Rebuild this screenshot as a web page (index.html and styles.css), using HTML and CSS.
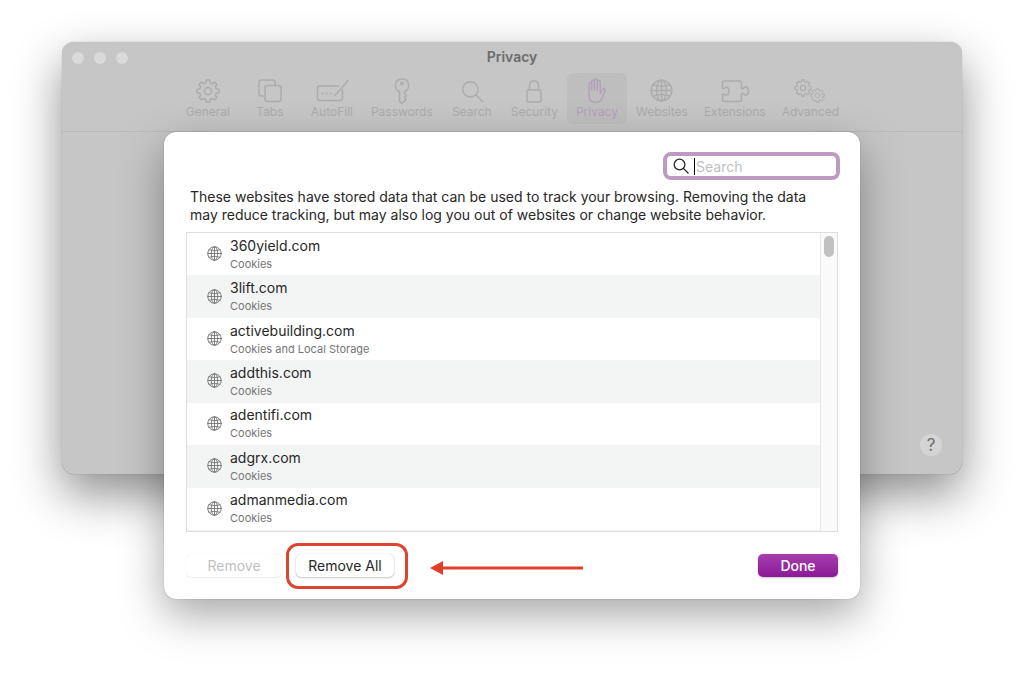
FILE: index.html
```html
<!DOCTYPE html>
<html lang="en">
<head>
    <meta charset="UTF-8">
    <meta name="viewport" content="width=device-width, initial-scale=1.0">
    <title>Privacy</title>
    <link rel="stylesheet" href="styles.css">
</head>
<body>
    <!-- shared icons -->
    <svg class="sprite" aria-hidden="true">
        <symbol id="gear" viewBox="-12 -12 24 24">
            <path d="M10.9-1.7V1.7L8.3 2.1L7.4 4.4L8.9 6.5L6.5 8.9L4.4 7.4L2.1 8.3L1.7 10.9H-1.7L-2.1 8.3L-4.4 7.4L-6.5 8.9L-8.9 6.5L-7.4 4.4L-8.3 2.1L-10.9 1.7V-1.7L-8.3-2.1L-7.4-4.4L-8.9-6.5L-6.5-8.9L-4.4-7.4L-2.1-8.3L-1.7-10.9H1.7L2.1-8.3L4.4-7.4L6.5-8.9L8.9-6.5L7.4-4.4L8.3-2.1Z"/>
            <circle r="3.6"/>
        </symbol>
        <symbol id="globe" viewBox="0 0 24 24">
            <circle cx="12" cy="12" r="10.8"/>
            <ellipse cx="12" cy="12" rx="5.2" ry="10.8"/>
            <path d="M12 1.2V22.8M1.2 12H22.8M3.2 6Q12 9.6 20.8 6M3.2 18Q12 14.4 20.8 18"/>
        </symbol>
        <symbol id="glass" viewBox="0 0 24 24">
            <circle cx="9.8" cy="9.8" r="8"/>
            <path d="M15.6 15.6L22.6 22.6"/>
        </symbol>
    </svg>

    <main class="window">
        <header class="toolbar">
            <div class="lights"><span></span><span></span><span></span></div>
            <h1>Privacy</h1>
            <nav class="tabs">
                <button class="tab"><svg viewBox="0 0 32 26"><use href="#gear" x="4" y="1" width="24" height="24"/></svg>General</button>
                <button class="tab"><svg viewBox="0 0 32 26">
                    <path d="M9.5 18H7.5Q5 18 5 15.500V4.500Q5 2 7.500 2H18.500Q21 2 21 4.500V7.500"/>
                    <rect x="11" y="7.500" width="16" height="16" rx="2.500"/>
                </svg>Tabs</button>
                <button class="tab"><svg viewBox="0 0 32 26">
                    <path d="M23 8H4Q1.500 8 1.500 10.500V20Q1.500 22.500 4 22.500H24Q26.500 22.500 26.500 20V12M20.500 16L32 2.500M20.500 16L18.500 17.500"/>
                    <path class="dots" d="M6.500 15.500V15.500M10.500 15.500V15.500M14.500 15.500V15.500"/>
                </svg>AutoFill</button>
                <button class="tab"><svg viewBox="0 0 32 26">
                    <path d="M13.500 13.500C7.500 11 8 1 16 1C24 1 24.500 11 18.500 13.500V15.500L20.500 17.500L18.500 19.500L20 21.500L16 25.500L13.500 23Z"/>
                    <circle cx="16" cy="5.500" r="1.300"/>
                </svg>Passwords</button>
                <button class="tab"><svg viewBox="0 0 32 26"><use href="#glass" x="5" y="2" width="23" height="23"/></svg>Search</button>
                <button class="tab"><svg viewBox="0 0 32 26">
                    <rect x="9" y="12" width="14" height="12" rx="1.500"/>
                    <path d="M11.500 12V7.500Q11.500 3 16 3Q20.500 3 20.500 7.500V12"/>
                </svg>Security</button>
                <button class="tab active"><svg viewBox="0 0 32 26">
                    <path d="M8 14V6Q8 4.600 9.300 4.600Q10.600 4.600 10.600 6V12.500M10.600 12.500V3.500Q10.600 2 12 2Q13.400 2 13.400 3.500V12M13.400 12V2.500Q13.400 1 14.800 1Q16.300 1 16.300 2.500V12M16.300 12.500V4Q16.300 2.600 17.700 2.600Q19.200 2.600 19.200 4V15.500L21.500 11.500Q22.700 10 24 11Q24.500 11.500 24 12.800L20.800 20.500Q18.800 24.500 14.800 24.500Q8 24.500 8 17V13.500"/>
                </svg>Privacy</button>
                <button class="tab"><svg viewBox="0 0 32 26"><use href="#globe" x="4" y="1" width="23" height="23"/></svg>Websites</button>
                <button class="tab"><svg viewBox="0 0 32 26">
                    <path d="M5.500 3H20.500Q22.500 3 22.500 5V10.500H24.500C25 8 29.500 8 29.500 13C29.500 18 25 18 24.500 15.500H22.500V21.500Q22.500 23.500 20.500 23.500H5.500Q3.500 23.500 3.500 21.500V16H5.500C6 18 10 18 10 13C10 8.500 6 8.500 5.500 10.500H3.500V5Q3.500 3 5.500 3Z"/>
                </svg>Extensions</button>
                <button class="tab"><svg viewBox="0 0 32 26">
                    <use href="#gear" x="0" y="1" width="18" height="18"/>
                    <use href="#gear" x="16" y="10" width="15" height="15"/>
                </svg>Advanced</button>
            </nav>
        </header>
        <button class="help" aria-label="Help">?</button>

        <section class="sheet" role="dialog" aria-label="Website data">
            <div class="search">
                <svg viewBox="0 0 24 24"><use href="#glass"/></svg>
                <span class="caret"></span>
                <input type="text" placeholder="Search" aria-label="Search">
            </div>
            <p class="info">These websites have stored data that can be used to track your browsing. Removing the data may reduce tracking, but may also log you out of websites or change website behavior.</p>

            <div class="list">
                <ul class="sites">
                    <li><svg><use href="#globe"/></svg><div><h2>360yield.com</h2><p>Cookies</p></div></li>
                    <li><svg><use href="#globe"/></svg><div><h2>3lift.com</h2><p>Cookies</p></div></li>
                    <li><svg><use href="#globe"/></svg><div><h2>activebuilding.com</h2><p>Cookies and Local Storage</p></div></li>
                    <li><svg><use href="#globe"/></svg><div><h2>addthis.com</h2><p>Cookies</p></div></li>
                    <li><svg><use href="#globe"/></svg><div><h2>adentifi.com</h2><p>Cookies</p></div></li>
                    <li><svg><use href="#globe"/></svg><div><h2>adgrx.com</h2><p>Cookies</p></div></li>
                    <li><svg><use href="#globe"/></svg><div><h2>admanmedia.com</h2><p>Cookies</p></div></li>
                </ul>
                <div class="scrollbar"><span></span></div>
            </div>

            <footer class="actions">
                <button class="btn remove" disabled>Remove</button>
                <div class="highlight"><button class="btn">Remove All</button></div>
                <svg class="arrow" viewBox="0 0 153 14"><path d="M0 7L13 0V14Z"/><path d="M12 5.500H153V8.500H12Z"/></svg>
                <button class="btn done">Done</button>
            </footer>
        </section>
    </main>
</body>
</html>
```
FILE: styles.css
```css
* {
    box-sizing: border-box;
}
body {
    margin: 0;
    min-height: 100vh;
    padding: 42px 62px;
    background-color: #fff;
    color: #272727;
    font-family: Inter, "Liberation Sans", sans-serif;
    font-size: 14px;
}
h1, h2, p, ul {
    margin: 0;
    padding: 0;
}
button {
    font-family: inherit;
    border: none;
    padding: 0;
}
svg {
    fill: none;
    stroke: currentColor;
    stroke-width: 1.5;
    stroke-linejoin: round;
    stroke-linecap: round;
}
.sprite {
    position: absolute;
    width: 0;
    height: 0;
}

/* Preferences window behind the sheet */
.window {
    position: relative;
    display: flex;
    flex-direction: column;
    min-height: 432px;
    border-radius: 12px;
    background-color: #c6c6c6;
    box-shadow: 0 0 1px rgba(0, 0, 0, 0.4), 0 20px 48px rgba(0, 0, 0, 0.45);
}
.toolbar {
    position: relative;
    height: 90px;
    padding-top: 5px;
    border-bottom: 1px solid #b9b9b9;
}
.lights {
    position: absolute;
    top: 10px;
    left: 10px;
    display: flex;
    gap: 10px;
}
.lights span {
    width: 12px;
    height: 12px;
    border-radius: 50%;
    background-color: #dadada;
}
.toolbar h1 {
    font-size: 14px;
    line-height: 20px;
    font-weight: 600;
    text-align: center;
    color: #6c6c6c;
}
.tabs {
    display: flex;
    justify-content: center;
    gap: 2px;
    margin-top: 6px;
}
.tab {
    display: flex;
    flex-direction: column;
    align-items: center;
    min-width: 60px;
    height: 51px;
    padding: 5px 7px 0;
    border-radius: 6px;
    background: none;
    color: #acacac;
    font-size: 12px;
    line-height: 16px;
}
.tab svg {
    width: 32px;
    height: 26px;
    overflow: visible;
}
.tab .dots {
    stroke-width: 2;
}
.tab.active {
    background-color: #bebebe;
    color: #b5a0ba;
}
.help {
    width: 22px;
    height: 22px;
    margin: auto 20px 18px auto;
    border-radius: 50%;
    background-color: #d4d4d4;
    color: #6c6c6c;
    font-size: 17px;
    line-height: 22px;
}

/* Sheet */
.sheet {
    position: absolute;
    top: 90px;
    left: 102px;
    right: 102px;
    display: flex;
    flex-direction: column;
    padding: 20px 22px;
    border-radius: 12px;
    background-color: #fff;
    box-shadow: 0 0 1px rgba(0, 0, 0, 0.5), 0 16px 44px rgba(0, 0, 0, 0.35);
}
.search {
    display: flex;
    align-items: center;
    align-self: flex-end;
    width: 177px;
    height: 28px;
    margin-right: -2px;
    padding-left: 6px;
    border: 4px solid #bd9bc1;
    border-radius: 8px;
}
.search svg {
    width: 16px;
    height: 16px;
    stroke-width: 2;
}
.caret {
    width: 1px;
    height: 17px;
    margin-left: 5px;
    background-color: #000;
}
.search input {
    flex: 1;
    min-width: 0;
    padding: 0 1px;
    border: none;
    outline: none;
    background: none;
    font-family: inherit;
    font-size: 14px;
}
.search input::placeholder {
    color: #bfbfbf;
}
.info {
    margin: 8px 0;
    padding: 0 4px;
    line-height: 18px;
}

/* Website list */
.list {
    display: flex;
    height: 300px;
    border: 1px solid #dedede;
}
.sites {
    flex: 1;
    display: flex;
    flex-direction: column;
    list-style: none;
    border-bottom: 1px solid #f0f2f2;
}
.sites li {
    flex: 1;
    display: flex;
    align-items: center;
    gap: 8px;
    padding: 0 0 1px 20px;
}
.sites li:nth-child(even) {
    background-color: #f3f5f5;
}
.sites svg {
    width: 15px;
    height: 15px;
    color: #777;
}
.sites h2 {
    font-size: 14px;
    line-height: 20px;
    font-weight: 400;
}
.sites p {
    font-size: 11px;
    line-height: 16px;
    color: #757575;
}
.scrollbar {
    width: 17px;
    padding: 3px;
    border-left: 1px solid #e8e8e8;
    background-color: #fafafa;
}
.scrollbar span {
    display: block;
    height: 21px;
    border-radius: 5px;
    background-color: #c1c1c1;
}

/* Buttons under the list */
.actions {
    display: flex;
    align-items: center;
    margin: 22px 0 2px;
}
.btn {
    width: 98px;
    height: 23px;
    border-radius: 5px;
    background-color: #fff;
    color: #272727;
    font-size: 14px;
    line-height: 22px;
    box-shadow: 0 0 1px rgba(0, 0, 0, 0.3), 0 1px 2px rgba(0, 0, 0, 0.2);
}
.btn.remove {
    width: 96px;
    color: #bfbfbf;
    box-shadow: 0 0 1px rgba(0, 0, 0, 0.15), 0 1px 1px rgba(0, 0, 0, 0.06);
}
.highlight {
    position: relative;
    margin-left: 14px;
}
.highlight::after {
    content: "";
    position: absolute;
    inset: -11px -14px -12px -10px;
    border: 3px solid #dc4630;
    border-radius: 12px;
    pointer-events: none;
}
.arrow {
    width: 153px;
    height: 14px;
    margin: 4px 0 0 36px;
    fill: #e0402b;
    stroke: none;
}
.btn.done {
    width: 80px;
    margin-left: auto;
    background: linear-gradient(#a63fae, #8b1a96);
    color: #fff;
    font-weight: 500;
}
```
